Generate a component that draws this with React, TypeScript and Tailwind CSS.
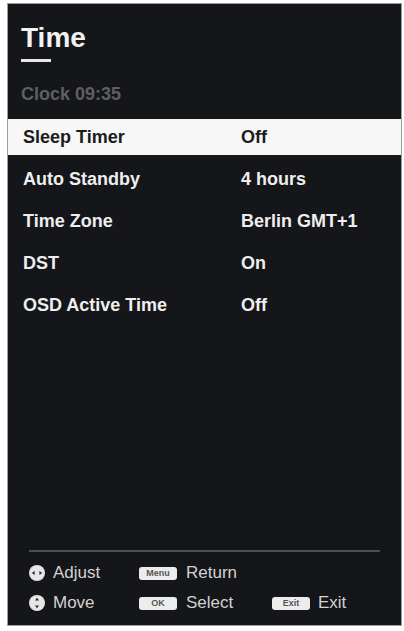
const rows = [
  { label: "Sleep Timer", value: "Off" },
  { label: "Auto Standby", value: "4 hours" },
  { label: "Time Zone", value: "Berlin GMT+1" },
  { label: "DST", value: "On" },
  { label: "OSD Active Time", value: "Off" },
]

function AdjustIcon() {
  return (
    <svg width="16" height="16" viewBox="0 0 16 16" className="shrink-0">
      <circle cx="8" cy="8" r="8" fill="#e6e6e6" />
      <path d="M2.8 8 L5.6 6 L5.6 10 Z" fill="#2a2a2a" />
      <path d="M13.2 8 L10.4 6 L10.4 10 Z" fill="#2a2a2a" />
    </svg>
  )
}

function MoveIcon() {
  return (
    <svg width="16" height="16" viewBox="0 0 16 16" className="shrink-0">
      <circle cx="8" cy="8" r="8" fill="#e6e6e6" />
      <path d="M8 2.8 L6 5.6 L10 5.6 Z" fill="#2a2a2a" />
      <path d="M8 13.2 L6 10.4 L10 10.4 Z" fill="#2a2a2a" />
    </svg>
  )
}

function Key({ label }: { label: string }) {
  return (
    <span className="w-[38px] h-[13px] shrink-0 rounded-[3px] bg-[#ececec] text-[#555] text-[9px] font-bold leading-none flex items-center justify-center">
      {label}
    </span>
  )
}

export default function App() {
  return (
    <div
      className="w-[404px] h-[631px] bg-white pl-[7px] pt-[3px] pr-[2px] pb-[5px]"
      style={{ fontFamily: '"Liberation Sans", Arial, sans-serif' }}
    >
      <div className="h-full border border-[#9c9c9c] bg-[#151619] flex flex-col">
        <div className="pl-[13px] pt-[20px]">
          <h1 className="text-[28px] leading-[28px] font-bold text-[#f2f2f2]">Time</h1>
          <div className="mt-[7px] w-[30px] h-[3px] bg-[#e8e8e8]" />
          <div className="mt-[23px] text-[18px] leading-[18px] font-bold text-[#5e5f61]">
            Clock 09:35
          </div>
        </div>

        <div className="mt-[16px] flex flex-col gap-[6px]">
          {rows.map((row, i) => (
            <div
              key={row.label}
              className={
                i === 0
                  ? "h-[36px] flex items-center pl-[15px] bg-[#f7f7f7] text-[#1c1c1c]"
                  : "h-[36px] flex items-center pl-[15px] text-[#eeeeee]"
              }
            >
              <span className="w-[218px] text-[18px] leading-[18px] font-bold">{row.label}</span>
              <span className="text-[18px] leading-[18px] font-bold">{row.value}</span>
            </div>
          ))}
        </div>

        <div className="flex-1" />

        <div className="mx-[21px] h-[2px] bg-[#4e4f51]" />
        <div className="pl-[21px] pt-[10px] pb-[11px] flex flex-col gap-[8px] text-[17px] leading-[22px] text-[#d2d2d2]">
          <div className="flex items-center h-[22px]">
            <div className="w-[110px] flex items-center gap-[8px]">
              <AdjustIcon />
              <span>Adjust</span>
            </div>
            <div className="flex items-center gap-[9px]">
              <Key label="Menu" />
              <span>Return</span>
            </div>
          </div>
          <div className="flex items-center h-[22px]">
            <div className="w-[110px] flex items-center gap-[8px]">
              <MoveIcon />
              <span>Move</span>
            </div>
            <div className="w-[133px] flex items-center gap-[9px]">
              <Key label="OK" />
              <span>Select</span>
            </div>
            <div className="flex items-center gap-[8px]">
              <Key label="Exit" />
              <span>Exit</span>
            </div>
          </div>
        </div>
      </div>
    </div>
  )
}
